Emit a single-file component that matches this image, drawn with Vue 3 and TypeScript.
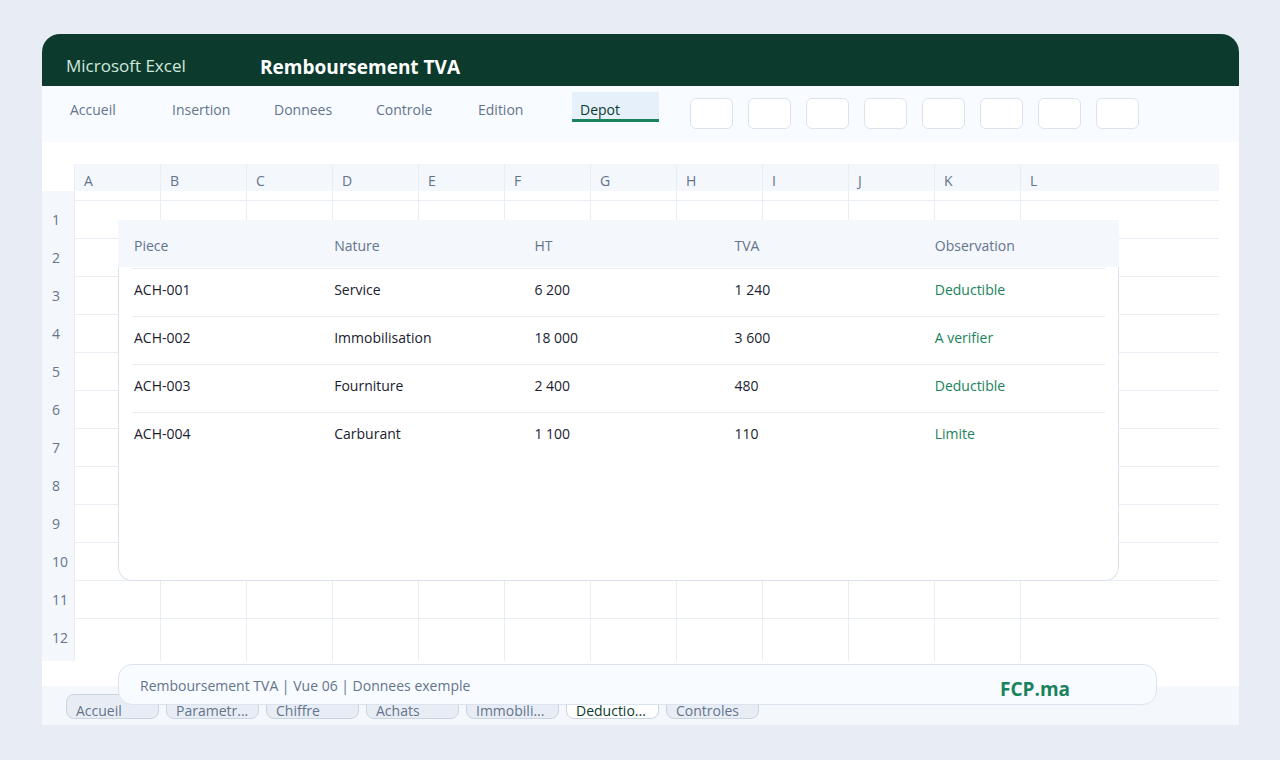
<script setup lang="ts">
import { ref } from 'vue'

interface Piece {
  id: string
  nature: string
  ht: string
  tva: string
  observation: string
}

const ribbonTabs: string[] = ['Accueil', 'Insertion', 'Donnees', 'Controle', 'Edition', 'Depot']
const activeRibbon = ref<string>('Depot')

const tools: number[] = [1, 2, 3, 4, 5, 6, 7, 8]

const columns: string[] = 'ABCDEFGHIJKL'.split('')
const rowCount = 12

const pieces: Piece[] = [
  { id: 'ACH-001', nature: 'Service', ht: '6 200', tva: '1 240', observation: 'Deductible' },
  { id: 'ACH-002', nature: 'Immobilisation', ht: '18 000', tva: '3 600', observation: 'A verifier' },
  { id: 'ACH-003', nature: 'Fourniture', ht: '2 400', tva: '480', observation: 'Deductible' },
  { id: 'ACH-004', nature: 'Carburant', ht: '1 100', tva: '110', observation: 'Limite' },
]

const sheets: string[] = ['Accueil', 'Parametr...', 'Chiffre', 'Achats', 'Immobili...', 'Deductio...', 'Controles']
const activeSheet = ref<string>('Deductio...')
</script>

<template>
  <div class="page">
    <main class="window">
      <header class="titlebar">
        <span class="app-name">Microsoft Excel</span>
        <h1 class="doc-title">Remboursement TVA</h1>
      </header>

      <div class="ribbon">
        <nav class="ribbon-tabs">
          <button
            v-for="tab in ribbonTabs"
            :key="tab"
            type="button"
            class="ribbon-tab"
            :class="{ active: tab === activeRibbon }"
            @click="activeRibbon = tab"
          >{{ tab }}</button>
        </nav>
        <div class="tools">
          <button v-for="tool in tools" :key="tool" type="button" class="tool"></button>
        </div>
      </div>

      <section class="sheet">
        <table class="grid">
          <colgroup>
            <col class="col-index" />
            <col v-for="letter in columns.slice(0, -1)" :key="letter" class="col-cell" />
            <col />
          </colgroup>
          <thead>
            <tr>
              <td class="corner"></td>
              <th v-for="letter in columns" :key="letter" scope="col">{{ letter }}</th>
            </tr>
          </thead>
          <tbody>
            <tr class="spacer">
              <th></th>
              <td v-for="letter in columns" :key="letter"></td>
            </tr>
            <tr v-for="row in rowCount" :key="row">
              <th scope="row">{{ row }}</th>
              <td v-for="letter in columns" :key="letter"></td>
            </tr>
          </tbody>
        </table>

        <div class="card">
          <table class="pieces">
            <thead>
              <tr>
                <th scope="col">Piece</th>
                <th scope="col">Nature</th>
                <th scope="col">HT</th>
                <th scope="col">TVA</th>
                <th scope="col">Observation</th>
              </tr>
            </thead>
            <tbody>
              <tr v-for="piece in pieces" :key="piece.id">
                <td>{{ piece.id }}</td>
                <td>{{ piece.nature }}</td>
                <td>{{ piece.ht }}</td>
                <td>{{ piece.tva }}</td>
                <td class="observation">{{ piece.observation }}</td>
              </tr>
            </tbody>
          </table>
        </div>
      </section>

      <nav class="sheet-tabs">
        <button
          v-for="name in sheets"
          :key="name"
          type="button"
          class="sheet-tab"
          :class="{ active: name === activeSheet }"
          @click="activeSheet = name"
        >{{ name }}</button>
      </nav>

      <footer class="status">
        <span>Remboursement TVA | Vue 06 | Donnees exemple</span>
        <strong class="brand">FCP.ma</strong>
      </footer>
    </main>
  </div>
</template>

<style>
body {
  margin: 0;
  background: #e8edf5;
}
</style>

<style scoped>
.page {
  box-sizing: border-box;
  min-height: 100vh;
  padding: 34px 41px 35px 42px;
  display: flex;
  background: #e8edf5;
  color: #64748b;
  font-family: "Open Sans", "Noto Sans", sans-serif;
  font-size: 14px;
  line-height: 20px;
}

button {
  box-sizing: border-box;
  margin: 0;
  font: inherit;
  color: inherit;
  text-align: left;
  cursor: pointer;
}

.window {
  position: relative;
  flex: 1;
  display: flex;
  flex-direction: column;
  overflow: hidden;
  border-radius: 18px 18px 0 0;
  background: #fff;
}

.titlebar {
  box-sizing: border-box;
  height: 52px;
  padding: 12px 24px 0;
  display: flex;
  background: #0c3b2e;
}

.app-name {
  width: 194px;
  color: #d1e7dd;
  font-size: 17px;
  line-height: 40px;
}

.doc-title {
  margin: 0;
  color: #fff;
  font-size: 19px;
  font-weight: 700;
  line-height: 42px;
}

.ribbon {
  box-sizing: border-box;
  height: 56px;
  padding: 6px 20px;
  display: flex;
  gap: 31px;
  background: #f8fbff;
}

.ribbon-tabs {
  display: flex;
  gap: 15px;
}

.ribbon-tab {
  width: 87px;
  height: 30px;
  padding: 8px 8px 0;
  border: 0;
  border-bottom: 3px solid transparent;
  background: none;
}

.ribbon-tab.active {
  border-bottom-color: #19835c;
  background: #e6f0fb;
  color: #0c3b2e;
}

.tools {
  display: flex;
  gap: 15px;
  padding-top: 6px;
}

.tool {
  width: 43px;
  height: 31px;
  padding: 0;
  border: 1px solid #dbe4ee;
  border-radius: 6px;
  background: #fff;
}

.sheet {
  position: relative;
  flex: 1;
  padding: 22px 20px 25px 0;
}

.grid {
  width: 100%;
  table-layout: fixed;
  border-spacing: 0;
}

.col-index {
  width: 32px;
}

.col-cell {
  width: 86px;
}

.grid th,
.grid td {
  box-sizing: border-box;
  height: 38px;
  padding: 0;
  border-left: 1px solid #e9eef4;
  font-weight: 400;
  text-align: left;
}

.grid thead th {
  height: 27px;
  padding: 7px 0 0 9px;
  background: #f4f7fc;
}

.grid thead .corner {
  height: 27px;
  border: 0;
}

.grid tbody th {
  padding: 2px 0 0 10px;
  border: 0;
  background: #f4f7fc;
}

.grid tbody td {
  border-top: 1px solid #e9eef4;
}

.grid .spacer th,
.grid .spacer td {
  height: 9px;
  border-top: 0;
}

.grid tbody tr:last-child th {
  padding-bottom: 5px;
  height: 43px;
}

.card {
  position: absolute;
  top: 78px;
  right: 120px;
  bottom: 105px;
  left: 76px;
  border-radius: 0 0 14px 14px;
  background: #fff;
  box-shadow: inset 0 0 0 1px #dbe2ec;
}

.pieces {
  width: 100%;
  table-layout: fixed;
  border-spacing: 0;
  color: #1a2130;
}

.pieces th,
.pieces td {
  box-sizing: border-box;
  height: 48px;
  padding: 0 0 4px 16px;
  font-weight: 400;
  text-align: left;
}

.pieces th {
  padding: 4px 0 0 16px;
  border-bottom: 1px solid transparent;
  background: #f4f7fc;
  background-clip: padding-box;
  color: #64748b;
}

.pieces tbody tr {
  background: linear-gradient(#e6ecf2, #e6ecf2) 14px 0 / calc(100% - 28px) 1px no-repeat;
}

.pieces .observation {
  color: #19835c;
}

.sheet-tabs {
  box-sizing: border-box;
  height: 39px;
  padding: 8px 24px 0;
  display: flex;
  gap: 7px;
  background: #f4f7fc;
}

.sheet-tab {
  width: 93px;
  height: 25px;
  padding: 7px 0 0 9px;
  border: 1px solid #cbd5e1;
  border-radius: 8px;
  background: #e8edf5;
  white-space: nowrap;
  line-height: 18px;
}

.sheet-tab.active {
  background: #fff;
  color: #0c3b2e;
}

.status {
  position: absolute;
  right: 82px;
  bottom: 20px;
  left: 76px;
  box-sizing: border-box;
  height: 41px;
  padding: 2px 0 0 21px;
  display: flex;
  align-items: center;
  justify-content: space-between;
  border: 1px solid #dbe4ee;
  border-radius: 14px;
  background: #f8fbff;
}

.brand {
  width: 156px;
  padding-top: 6px;
  color: #19835c;
  font-size: 19px;
  line-height: 24px;
}
</style>
